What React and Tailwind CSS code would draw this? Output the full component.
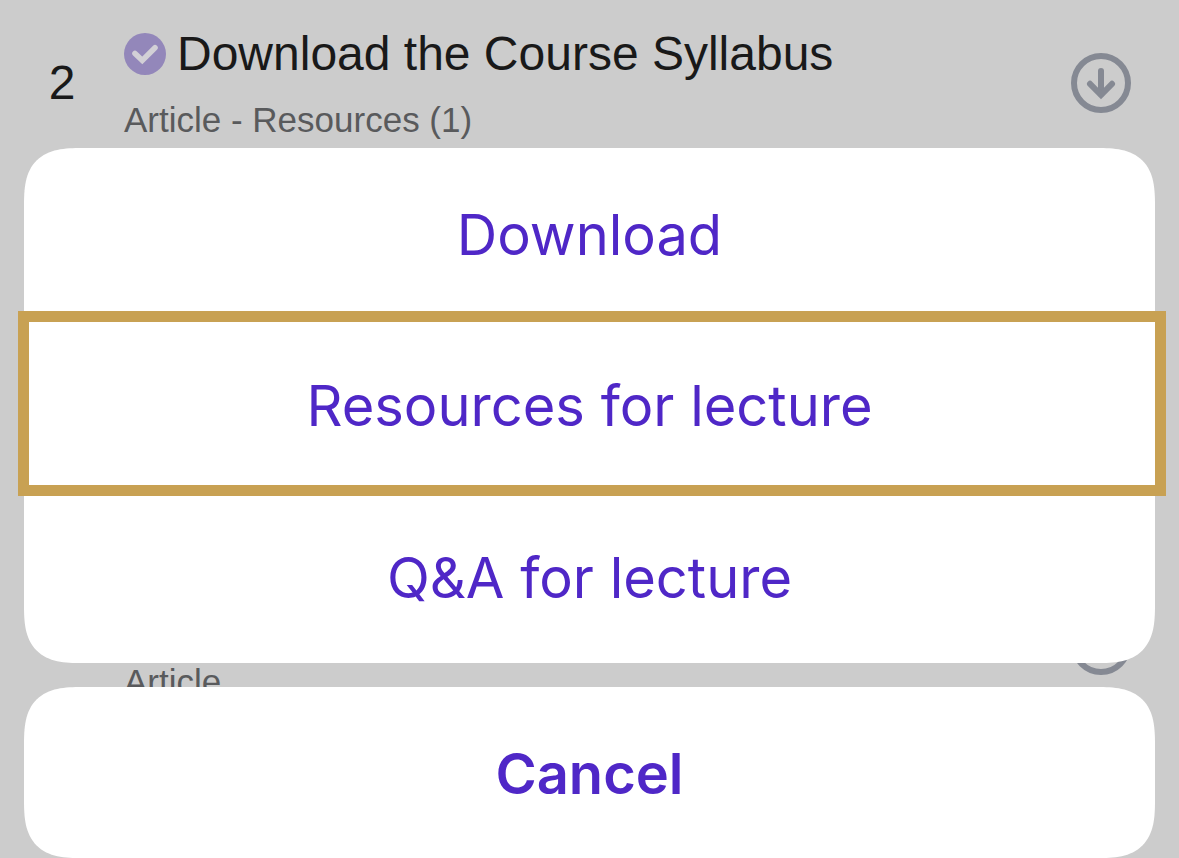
import React, { useState } from 'react';

const lectures = [
  { id: 2, number: '2', title: 'Download the Course Syllabus', meta: 'Article - Resources (1)', completed: true },
  { id: 5, meta: 'Article' },
];

const actions = ['Download', 'Resources for lecture', 'Q&A for lecture'];

const CompletedBadge = () => (
  <svg viewBox="0 0 42 42" className="size-[42px] shrink-0" role="img" aria-label="Completed">
    <circle cx="21" cy="21" r="21" fill="#9387ba" />
    <path d="M11 20.4 18.3 27.4 31 14.8" fill="none" stroke="#d2d0d6" strokeWidth="5.6" strokeLinecap="round" />
  </svg>
);

const DownloadIcon = () => (
  <svg viewBox="0 0 60 60" className="size-[60px]" fill="none" stroke="#858993" strokeWidth="6" strokeLinecap="round" aria-hidden="true">
    <circle cx="30" cy="30" r="27" />
    <path d="M30 18V41" />
    <path d="M19 30.8 30 42 41 30.8" />
  </svg>
);

const LectureRow = ({ lecture }) => (
  <li className="flex items-center h-[166px] pr-12">
    <span className="w-[124px] shrink-0 text-center text-5xl text-[#191919]">{lecture.number}</span>
    <div className="flex-1 min-w-0 pt-0.5">
      <div className="flex items-center gap-[11px] h-[72px]">
        {lecture.completed && <CompletedBadge />}
        {lecture.title && <h2 className="text-5xl text-[#191919] truncate leading-[72px]">{lecture.title}</h2>}
      </div>
      <p className="text-[35px] leading-[60px] text-[#595a5c]">{lecture.meta}</p>
    </div>
    <button type="button" aria-label="Download lecture">
      <DownloadIcon />
    </button>
  </li>
);

const App = () => {
  const [selected, setSelected] = useState('Resources for lecture');

  return (
    <div className="relative min-h-screen overflow-hidden bg-[#cccccc] font-['Liberation_Sans',Arial,sans-serif]">
      <ul className="flex flex-col gap-[396px]">
        {lectures.map((lecture) => (
          <LectureRow key={lecture.id} lecture={lecture} />
        ))}
      </ul>

      {/* action sheet over the lecture list */}
      <div
        role="dialog"
        aria-label="Lecture actions"
        className="absolute inset-x-0 bottom-0 flex flex-col gap-6 px-6 font-['Inter',sans-serif] text-[56px] text-[#4f27c7]"
      >
        <div className="grid grid-rows-3 h-[515px] rounded-[58px] [corner-shape:superellipse(1.5)] bg-white">
          {actions.map((action) => (
            <button
              key={action}
              type="button"
              onClick={() => setSelected(action)}
              className="relative pt-0.5"
            >
              {action}
              {selected === action && (
                <span className="absolute -top-[9px] -bottom-[5px] -left-[6px] -right-[11px] border-[11px] border-[#c8a153]" />
              )}
            </button>
          ))}
        </div>
        <button type="button" className="h-[171px] pt-0.5 rounded-[58px] [corner-shape:superellipse(1.5)] bg-white font-semibold">
          Cancel
        </button>
      </div>
    </div>
  );
};

export default App;
